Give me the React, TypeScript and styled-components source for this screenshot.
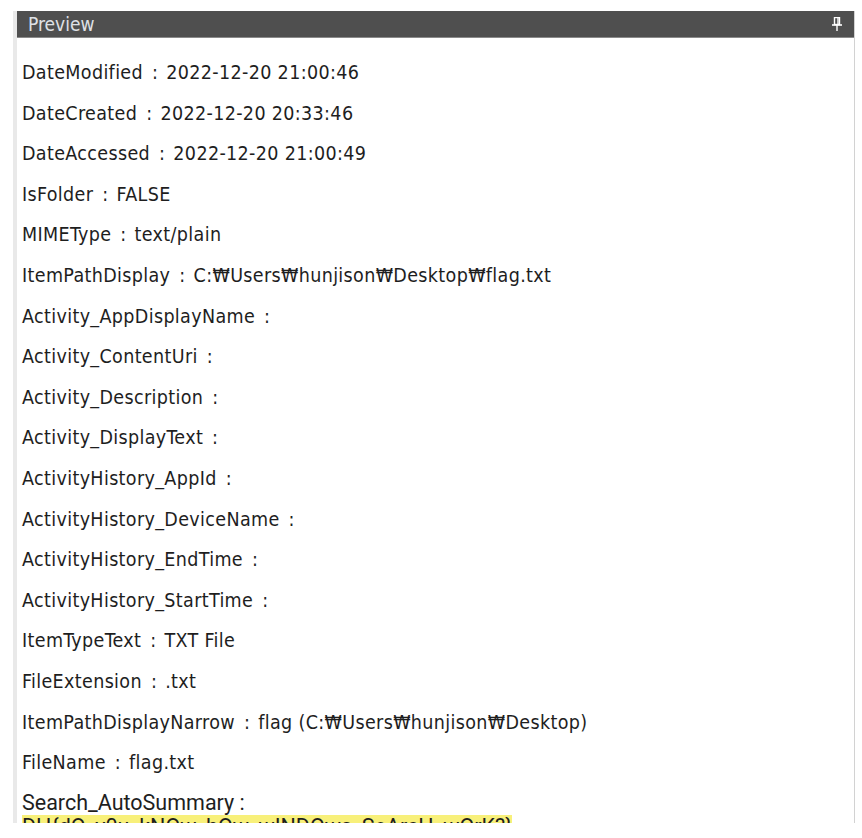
import React from "react";
import styled, { createGlobalStyle } from "styled-components";

const GlobalStyle = createGlobalStyle`
  html, body {
    margin: 0;
    padding: 0;
    background: #ffffff;
  }
  body {
    font-family: "DejaVu Sans Condensed", "Noto Sans CJK KR", sans-serif;
  }
`;

const Page = styled.div`
  width: 862px;
  height: 838px;
  padding: 11px 7px 0 13px;
  box-sizing: border-box;
`;

const Panel = styled.section`
  height: 812px;
  display: flex;
  flex-direction: column;
  border-left: 4px solid #e9e9e9;
  border-right: 1px solid #d2d2d2;
  overflow: hidden;
`;

const Header = styled.header`
  height: 26px;
  flex: none;
  display: flex;
  align-items: center;
  justify-content: space-between;
  padding: 0 12px 0 11px;
  background: #4f4f4f;
  border-bottom: 1px solid #8a8a8a;
  color: #dfe1e6;
  font-family: "DejaVu Sans Condensed", "DejaVu Sans", sans-serif;
  font-size: 19px;
`;

const Body = styled.div`
  flex: 1;
  overflow: hidden;
  padding: 15px 0 0 5px;
  background: #ffffff;
`;

const Row = styled.div`
  height: 40.6px;
  line-height: 40.6px;
  white-space: nowrap;
  color: #1e1e1e;
  font-family: "DejaVu Sans Condensed", "Noto Sans CJK KR", sans-serif;
  font-size: 19.5px;
  letter-spacing: 0.35px;
`;

const Sep = styled.span`
  display: inline-block;
  padding: 0 8px 0 9px;
`;

const Summary = styled.div`
  margin-top: 7px;
  color: #1e1e1e;
  font-family: Roboto, "Liberation Sans", sans-serif;
  font-size: 21.5px;
  line-height: 24px;
  white-space: nowrap;
`;

const Highlight = styled.span`
  display: inline-block;
  background: #f8f07a;
`;

const PinIcon = () => (
  <svg width="10" height="14" viewBox="0 0 10 14" fill="none">
    <rect x="2.5" y="0.5" width="5" height="7" stroke="#ffffff" strokeWidth="1.4" />
    <line x1="6" y1="1" x2="6" y2="7" stroke="#ffffff" strokeWidth="1.4" />
    <line x1="0" y1="8" x2="10" y2="8" stroke="#ffffff" strokeWidth="1.6" />
    <line x1="5" y1="8" x2="5" y2="14" stroke="#ffffff" strokeWidth="1.4" />
  </svg>
);

const fields: [string, string][] = [
  ["DateModified", "2022-12-20 21:00:46"],
  ["DateCreated", "2022-12-20 20:33:46"],
  ["DateAccessed", "2022-12-20 21:00:49"],
  ["IsFolder", "FALSE"],
  ["MIMEType", "text/plain"],
  ["ItemPathDisplay", "C:\u20A9Users\u20A9hunjison\u20A9Desktop\u20A9flag.txt"],
  ["Activity_AppDisplayName", ""],
  ["Activity_ContentUri", ""],
  ["Activity_Description", ""],
  ["Activity_DisplayText", ""],
  ["ActivityHistory_AppId", ""],
  ["ActivityHistory_DeviceName", ""],
  ["ActivityHistory_EndTime", ""],
  ["ActivityHistory_StartTime", ""],
  ["ItemTypeText", "TXT File"],
  ["FileExtension", ".txt"],
  ["ItemPathDisplayNarrow", "flag (C:\u20A9Users\u20A9hunjison\u20A9Desktop)"],
  ["FileName", "flag.txt"],
];

export default function App() {
  return (
    <>
      <GlobalStyle />
      <Page>
        <Panel>
          <Header>
            <span>Preview</span>
            <PinIcon />
          </Header>
          <Body>
            {fields.map(([key, value]) => (
              <Row key={key}>
                {key}
                <Sep>:</Sep>
                {value}
              </Row>
            ))}
            <Summary>
              Search_AutoSummary :
              <br />
              <Highlight>DH{"{"}dO_y0u_kNOw_hOw_wINDOws_SeArcH_wOrK?{"}"}</Highlight>
            </Summary>
          </Body>
        </Panel>
      </Page>
    </>
  );
}
